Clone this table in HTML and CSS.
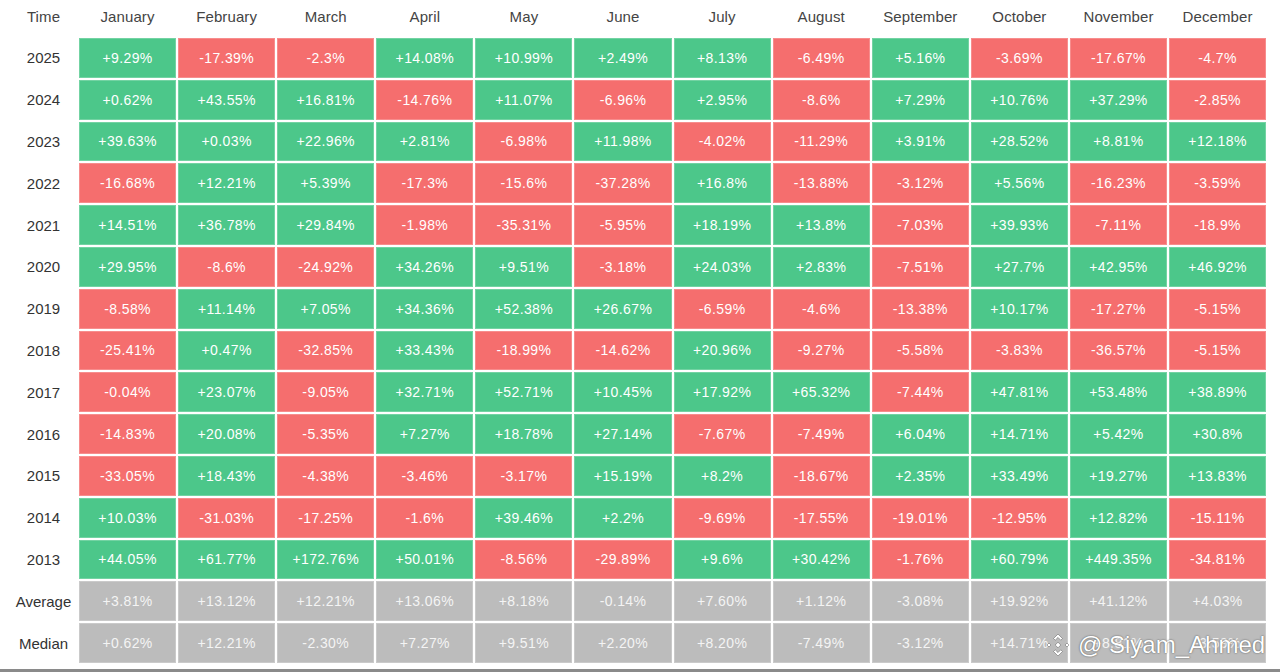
FILE: index.html
```html
<!DOCTYPE html>
<html lang="en">
<head>
<meta charset="utf-8">
<title>Monthly Returns</title>
<link rel="stylesheet" href="styles.css">
</head>
<body>
<div class="page">
  <div class="grid">
    <div class="hd lbl">Time</div>
    <div class="hd">January</div><div class="hd">February</div><div class="hd">March</div><div class="hd">April</div><div class="hd">May</div><div class="hd">June</div><div class="hd">July</div><div class="hd">August</div><div class="hd">September</div><div class="hd">October</div><div class="hd">November</div><div class="hd">December</div>

    <div class="lbl">2025</div>
    <div class="c up">+9.29%</div><div class="c dn">-17.39%</div><div class="c dn">-2.3%</div><div class="c up">+14.08%</div><div class="c up">+10.99%</div><div class="c up">+2.49%</div><div class="c up">+8.13%</div><div class="c dn">-6.49%</div><div class="c up">+5.16%</div><div class="c dn">-3.69%</div><div class="c dn">-17.67%</div><div class="c dn">-4.7%</div>

    <div class="lbl">2024</div>
    <div class="c up">+0.62%</div><div class="c up">+43.55%</div><div class="c up">+16.81%</div><div class="c dn">-14.76%</div><div class="c up">+11.07%</div><div class="c dn">-6.96%</div><div class="c up">+2.95%</div><div class="c dn">-8.6%</div><div class="c up">+7.29%</div><div class="c up">+10.76%</div><div class="c up">+37.29%</div><div class="c dn">-2.85%</div>

    <div class="lbl">2023</div>
    <div class="c up">+39.63%</div><div class="c up">+0.03%</div><div class="c up">+22.96%</div><div class="c up">+2.81%</div><div class="c dn">-6.98%</div><div class="c up">+11.98%</div><div class="c dn">-4.02%</div><div class="c dn">-11.29%</div><div class="c up">+3.91%</div><div class="c up">+28.52%</div><div class="c up">+8.81%</div><div class="c up">+12.18%</div>

    <div class="lbl">2022</div>
    <div class="c dn">-16.68%</div><div class="c up">+12.21%</div><div class="c up">+5.39%</div><div class="c dn">-17.3%</div><div class="c dn">-15.6%</div><div class="c dn">-37.28%</div><div class="c up">+16.8%</div><div class="c dn">-13.88%</div><div class="c dn">-3.12%</div><div class="c up">+5.56%</div><div class="c dn">-16.23%</div><div class="c dn">-3.59%</div>

    <div class="lbl">2021</div>
    <div class="c up">+14.51%</div><div class="c up">+36.78%</div><div class="c up">+29.84%</div><div class="c dn">-1.98%</div><div class="c dn">-35.31%</div><div class="c dn">-5.95%</div><div class="c up">+18.19%</div><div class="c up">+13.8%</div><div class="c dn">-7.03%</div><div class="c up">+39.93%</div><div class="c dn">-7.11%</div><div class="c dn">-18.9%</div>

    <div class="lbl">2020</div>
    <div class="c up">+29.95%</div><div class="c dn">-8.6%</div><div class="c dn">-24.92%</div><div class="c up">+34.26%</div><div class="c up">+9.51%</div><div class="c dn">-3.18%</div><div class="c up">+24.03%</div><div class="c up">+2.83%</div><div class="c dn">-7.51%</div><div class="c up">+27.7%</div><div class="c up">+42.95%</div><div class="c up">+46.92%</div>

    <div class="lbl">2019</div>
    <div class="c dn">-8.58%</div><div class="c up">+11.14%</div><div class="c up">+7.05%</div><div class="c up">+34.36%</div><div class="c up">+52.38%</div><div class="c up">+26.67%</div><div class="c dn">-6.59%</div><div class="c dn">-4.6%</div><div class="c dn">-13.38%</div><div class="c up">+10.17%</div><div class="c dn">-17.27%</div><div class="c dn">-5.15%</div>

    <div class="lbl">2018</div>
    <div class="c dn">-25.41%</div><div class="c up">+0.47%</div><div class="c dn">-32.85%</div><div class="c up">+33.43%</div><div class="c dn">-18.99%</div><div class="c dn">-14.62%</div><div class="c up">+20.96%</div><div class="c dn">-9.27%</div><div class="c dn">-5.58%</div><div class="c dn">-3.83%</div><div class="c dn">-36.57%</div><div class="c dn">-5.15%</div>

    <div class="lbl">2017</div>
    <div class="c dn">-0.04%</div><div class="c up">+23.07%</div><div class="c dn">-9.05%</div><div class="c up">+32.71%</div><div class="c up">+52.71%</div><div class="c up">+10.45%</div><div class="c up">+17.92%</div><div class="c up">+65.32%</div><div class="c dn">-7.44%</div><div class="c up">+47.81%</div><div class="c up">+53.48%</div><div class="c up">+38.89%</div>

    <div class="lbl">2016</div>
    <div class="c dn">-14.83%</div><div class="c up">+20.08%</div><div class="c dn">-5.35%</div><div class="c up">+7.27%</div><div class="c up">+18.78%</div><div class="c up">+27.14%</div><div class="c dn">-7.67%</div><div class="c dn">-7.49%</div><div class="c up">+6.04%</div><div class="c up">+14.71%</div><div class="c up">+5.42%</div><div class="c up">+30.8%</div>

    <div class="lbl">2015</div>
    <div class="c dn">-33.05%</div><div class="c up">+18.43%</div><div class="c dn">-4.38%</div><div class="c dn">-3.46%</div><div class="c dn">-3.17%</div><div class="c up">+15.19%</div><div class="c up">+8.2%</div><div class="c dn">-18.67%</div><div class="c up">+2.35%</div><div class="c up">+33.49%</div><div class="c up">+19.27%</div><div class="c up">+13.83%</div>

    <div class="lbl">2014</div>
    <div class="c up">+10.03%</div><div class="c dn">-31.03%</div><div class="c dn">-17.25%</div><div class="c dn">-1.6%</div><div class="c up">+39.46%</div><div class="c up">+2.2%</div><div class="c dn">-9.69%</div><div class="c dn">-17.55%</div><div class="c dn">-19.01%</div><div class="c dn">-12.95%</div><div class="c up">+12.82%</div><div class="c dn">-15.11%</div>

    <div class="lbl">2013</div>
    <div class="c up">+44.05%</div><div class="c up">+61.77%</div><div class="c up">+172.76%</div><div class="c up">+50.01%</div><div class="c dn">-8.56%</div><div class="c dn">-29.89%</div><div class="c up">+9.6%</div><div class="c up">+30.42%</div><div class="c dn">-1.76%</div><div class="c up">+60.79%</div><div class="c up">+449.35%</div><div class="c dn">-34.81%</div>

    <div class="lbl">Average</div>
    <div class="c nt">+3.81%</div><div class="c nt">+13.12%</div><div class="c nt">+12.21%</div><div class="c nt">+13.06%</div><div class="c nt">+8.18%</div><div class="c nt">-0.14%</div><div class="c nt">+7.60%</div><div class="c nt">+1.12%</div><div class="c nt">-3.08%</div><div class="c nt">+19.92%</div><div class="c nt">+41.12%</div><div class="c nt">+4.03%</div>

    <div class="lbl">Median</div>
    <div class="c nt">+0.62%</div><div class="c nt">+12.21%</div><div class="c nt">-2.30%</div><div class="c nt">+7.27%</div><div class="c nt">+9.51%</div><div class="c nt">+2.20%</div><div class="c nt">+8.20%</div><div class="c nt">-7.49%</div><div class="c nt">-3.12%</div><div class="c nt">+14.71%</div><div class="c nt">+8.81%</div><div class="c nt">-3.59%</div>
  </div>
  <div class="bottom-bar"></div>

  <div class="watermark">
    <svg class="wm-logo" width="28" height="28" viewBox="0 0 28 28" aria-hidden="true">
      <g fill="#ffffff" stroke="rgba(70,70,70,0.55)" stroke-width="0.8">
        <path d="M14 3 L18.5 7.5 L16.8 9.2 L14 6.4 L11.2 9.2 L9.5 7.5 Z"/>
        <path d="M14 25 L9.5 20.5 L11.2 18.8 L14 21.6 L16.8 18.8 L18.5 20.5 Z"/>
        <path d="M3 14 L5 12 L7 14 L5 16 Z"/>
        <path d="M25 14 L23 12 L21 14 L23 16 Z"/>
        <path d="M14 11.2 L16.8 14 L14 16.8 L11.2 14 Z"/>
      </g>
    </svg>
    <span class="wm-text">@ Siyam_Ahmed</span>
  </div>
</div>
</body>
</html>
```

FILE: styles.css
```css
html, body {
  margin: 0;
  padding: 0;
  background: #ffffff;
}

.page {
  position: relative;
  width: 1280px;
  height: 672px;
  overflow: hidden;
  font-family: "Liberation Sans", Arial, sans-serif;
}

.grid {
  display: grid;
  grid-template-columns: 77px repeat(12, 97.1px);
  grid-template-rows: 36px;
  grid-auto-rows: 39.8px;
  column-gap: 2px;
  row-gap: 2px;
}

.hd {
  font-size: 15px;
  color: #444444;
  line-height: 33px;
  text-align: center;
  letter-spacing: 0.1px;
}

.lbl {
  font-size: 15px;
  color: #333333;
  display: flex;
  align-items: center;
  justify-content: center;
  padding-left: 10px;
}

.hd.lbl {
  display: block;
  color: #444444;
}

.c {
  display: flex;
  align-items: center;
  justify-content: center;
  color: #ffffff;
  font-size: 14px;
  letter-spacing: 0.4px;
  box-shadow: inset 0 0 0 1px rgba(255, 255, 255, 0.22);
}

.up { background: #4cc78a; }
.dn { background: #f56e6e; }
.nt { background: #bcbcbc; color: #f4f4f4; }

.bottom-bar {
  margin-top: 6px;
  height: 3px;
  background: #8a8a8a;
}

.watermark {
  position: absolute;
  left: 1044px;
  top: 629px;
  display: flex;
  align-items: center;
  gap: 6px;
}

.wm-text {
  font-family: "Liberation Sans", Arial, sans-serif;
  font-size: 24px;
  color: #ffffff;
  text-shadow: 0 0 2px rgba(60, 60, 60, 0.6), 0 0 1px rgba(60, 60, 60, 0.6);
  line-height: 32px;
}
```
